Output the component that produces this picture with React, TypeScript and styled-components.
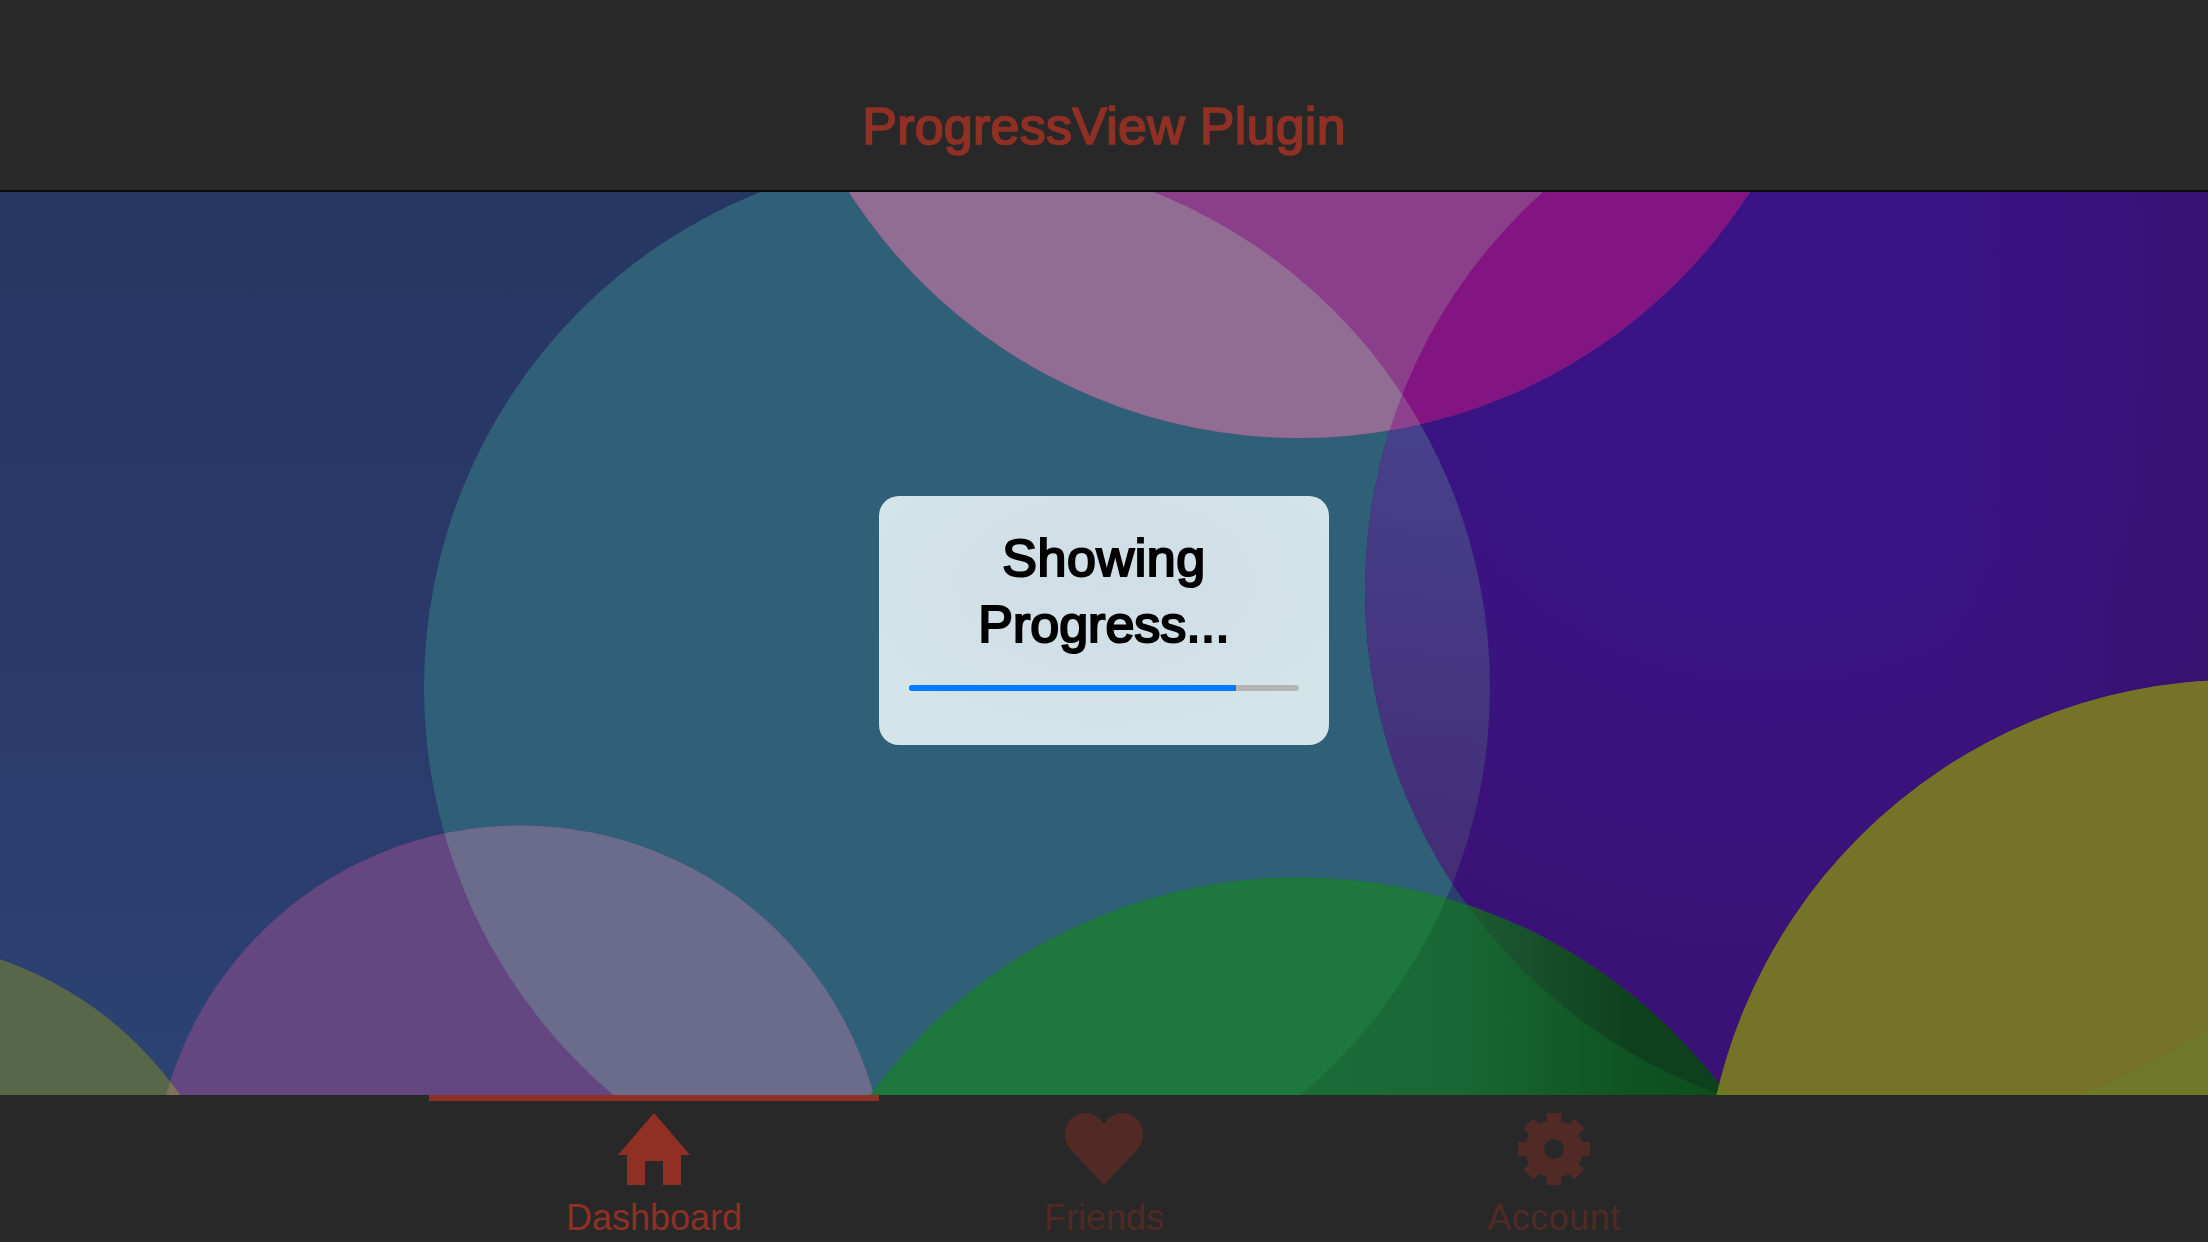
import React from "react";
import styled, { createGlobalStyle } from "styled-components";

const GlobalStyle = createGlobalStyle`
  * { box-sizing: border-box; }
  html, body { margin: 0; padding: 0; background: #282828; }
`;

const Screen = styled.div`
  display: flex;
  flex-direction: column;
  width: 2208px;
  height: 1242px;
  overflow: hidden;
  background: #282828;
  font-family: "Liberation Sans", Arial, Helvetica, sans-serif;
`;

const ActionBar = styled.header`
  display: flex;
  justify-content: center;
  height: 192px;
  padding-top: 97px;
  border-bottom: 2px solid #0a0a0a;
`;

const Title = styled.h1`
  margin: 0;
  font-size: 52px;
  font-weight: 400;
  line-height: 58px;
  letter-spacing: 0.25px;
  color: #903024;
  -webkit-text-stroke: 1.7px #903024;
`;

const Content = styled.main`
  position: relative;
  display: flex;
  justify-content: center;
  align-items: flex-start;
  height: 903px;
  padding-top: 304px;
`;

const Wallpaper = styled.svg`
  position: absolute;
  inset: 0;
  width: 2208px;
  height: 903px;
`;

const Hud = styled.section`
  position: relative;
  display: flex;
  flex-direction: column;
  width: 450px;
  height: 249px;
  padding: 29px 30px 0;
  border-radius: 20px;
  background: radial-gradient(ellipse 250px 150px at 225px 88px, #cfdfe5 0%, #d0e0e6 40%, #d4e5ea 100%);
`;

const Message = styled.p`
  margin: 0;
  font-size: 52px;
  line-height: 66px;
  text-align: center;
  color: #000;
  -webkit-text-stroke: 2.2px #000;
`;

const Line = styled.span<{ $spacing: number }>`
  display: block;
  letter-spacing: ${(p) => p.$spacing}px;
`;

const Track = styled.div`
  height: 6px;
  margin-top: 28px;
  border-radius: 3px;
  overflow: hidden;
  background: #b5b5b6;
`;

const Fill = styled.div`
  height: 100%;
  background: #007aff;
`;

const TabBar = styled.nav`
  display: flex;
  justify-content: center;
  height: 147px;
`;

const Tab = styled.div<{ $active?: boolean }>`
  display: flex;
  flex-direction: column;
  align-items: center;
  width: 450px;
  padding-top: 12px;
  border-top: 6px solid ${(p) => (p.$active ? "#903024" : "transparent")};
  color: ${(p) => (p.$active ? "#903024" : "#512a26")};
`;

const TabIcon = styled.svg`
  width: 80px;
  height: 72px;
  fill: currentColor;
`;

const TabLabel = styled.span<{ $spacing: number }>`
  margin-top: 13px;
  font-size: 36px;
  line-height: 40px;
  letter-spacing: ${(p) => p.$spacing}px;
`;

const Circles = () => (
  <Wallpaper viewBox="0 192 2208 903">
    <defs>
      <linearGradient id="sky" x1="0" y1="192" x2="0" y2="1095" gradientUnits="userSpaceOnUse">
        <stop offset="0" stopColor="#273763" />
        <stop offset="0.5" stopColor="#2a396a" />
        <stop offset="1" stopColor="#2b4373" />
      </linearGradient>
      <radialGradient id="violet" cx="1770" cy="300" r="900" gradientUnits="userSpaceOnUse">
        <stop offset="0" stopColor="#3a1485" />
        <stop offset="0.38" stopColor="#3a1483" />
        <stop offset="0.65" stopColor="#3a1279" />
        <stop offset="1" stopColor="#3a1071" />
      </radialGradient>
      <linearGradient id="violetShade" x1="1940" y1="0" x2="2208" y2="0" gradientUnits="userSpaceOnUse">
        <stop offset="0" stopColor="#38106e" stopOpacity="0" />
        <stop offset="0.5" stopColor="#38106e" stopOpacity="0.2" />
        <stop offset="1" stopColor="#38106e" stopOpacity="0.65" />
      </linearGradient>
      <linearGradient id="indigo" x1="1440" y1="440" x2="1400" y2="870" gradientUnits="userSpaceOnUse">
        <stop offset="0" stopColor="#47408b" />
        <stop offset="1" stopColor="#432d76" />
      </linearGradient>
      <linearGradient id="forest" x1="1340" y1="0" x2="1715" y2="0" gradientUnits="userSpaceOnUse">
        <stop offset="0" stopColor="#1b6b38" />
        <stop offset="0.35" stopColor="#186633" />
        <stop offset="0.75" stopColor="#105423" />
        <stop offset="1" stopColor="#0c4e1c" />
      </linearGradient>
      <linearGradient id="pine" x1="1470" y1="0" x2="1640" y2="0" gradientUnits="userSpaceOnUse">
        <stop offset="0" stopColor="#1d5932" />
        <stop offset="1" stopColor="#0d401c" />
      </linearGradient>
      <clipPath id="inTeal"><circle cx="957" cy="687.5" r="533" /></clipPath>
      <clipPath id="inViolet"><circle cx="1900.3" cy="590.5" r="535.3" /></clipPath>
      <clipPath id="inLilac"><circle cx="520" cy="1192.5" r="367" /></clipPath>
      <clipPath id="inGreen"><circle cx="1299" cy="1408" r="530.5" /></clipPath>
    </defs>

    <rect y="192" width="2208" height="903" fill="url(#sky)" />
    <circle cx="957" cy="687.5" r="533" fill="#2f6077" />
    <circle cx="1900.3" cy="590.5" r="535.3" fill="url(#violet)" />
    <circle cx="1900.3" cy="590.5" r="535.3" fill="url(#violetShade)" />
    <circle cx="1900.3" cy="590.5" r="535.3" fill="url(#indigo)" clipPath="url(#inTeal)" />

    <circle cx="1299.3" cy="-97.5" r="535.5" fill="#8b3f8a" />
    <circle cx="1299.3" cy="-97.5" r="535.5" fill="#831582" clipPath="url(#inViolet)" />
    <g clipPath="url(#inTeal)">
      <circle cx="1299.3" cy="-97.5" r="535.5" fill="#916c93" />
      <circle cx="1299.3" cy="-97.5" r="535.5" fill="#8e418d" clipPath="url(#inViolet)" />
    </g>

    <circle cx="520" cy="1192.5" r="367" fill="#644681" />
    <circle cx="520" cy="1192.5" r="367" fill="#6b6c8b" clipPath="url(#inTeal)" />
    <circle cx="-118" cy="1303" r="363.5" fill="#586749" />
    <circle cx="-118" cy="1303" r="363.5" fill="#80715a" clipPath="url(#inLilac)" />

    <circle cx="1299" cy="1408" r="530.5" fill="url(#forest)" />
    <circle cx="1299" cy="1408" r="530.5" fill="url(#pine)" clipPath="url(#inViolet)" />
    <circle cx="1299" cy="1408" r="530.5" fill="#1e773d" clipPath="url(#inTeal)" />

    <circle cx="2238" cy="1215" r="535" fill="#6e7a29" />
    <circle cx="2238" cy="1215" r="535" fill="#757328" clipPath="url(#inViolet)" />
    <circle cx="2238" cy="1215" r="535" fill="#6b7d1a" clipPath="url(#inGreen)" />
  </Wallpaper>
);

const HomeIcon = () => (
  <TabIcon viewBox="-40 0 80 72">
    <path d="M0 0 L36 42 H27 V72 H9 V48 H-9 V72 H-27 V42 H-36 Z" />
  </TabIcon>
);

const HeartIcon = () => (
  <TabIcon viewBox="-40 0 80 72">
    <path d="M0 11 C-5 4 -11 0 -19 0 C-31 0 -39 10 -39 22 C-39 28 -37 33 -33 37 L0 72 L33 37 C37 33 39 28 39 22 C39 10 31 0 19 0 C11 0 5 4 0 11 Z" />
  </TabIcon>
);

const GearIcon = () => (
  <TabIcon viewBox="-40 -36 80 72">
    <path
      fillRule="evenodd"
      d="M-29 0 A29 29 0 1 1 29 0 A29 29 0 1 1 -29 0 Z M-10 0 A10 10 0 1 0 10 0 A10 10 0 1 0 -10 0 Z"
    />
    {[0, 45, 90, 135, 180, 225, 270, 315].map((angle) => (
      <rect key={angle} x="-7" y="-36" width="14" height="12" transform={`rotate(${angle})`} />
    ))}
  </TabIcon>
);

const progress = 327 / 390;

export default function App() {
  return (
    <>
      <GlobalStyle />
      <Screen>
        <ActionBar>
          <Title>ProgressView Plugin</Title>
        </ActionBar>
        <Content>
          <Circles />
          <Hud>
            <Message>
              <Line $spacing={0.6}>Showing</Line>
              <Line $spacing={0}>Progress...</Line>
            </Message>
            <Track>
              <Fill style={{ width: `${progress * 100}%` }} />
            </Track>
          </Hud>
        </Content>
        <TabBar>
          <Tab $active>
            <HomeIcon />
            <TabLabel $spacing={0}>Dashboard</TabLabel>
          </Tab>
          <Tab>
            <HeartIcon />
            <TabLabel $spacing={0}>Friends</TabLabel>
          </Tab>
          <Tab>
            <GearIcon />
            <TabLabel $spacing={0.5}>Account</TabLabel>
          </Tab>
        </TabBar>
      </Screen>
    </>
  );
}
